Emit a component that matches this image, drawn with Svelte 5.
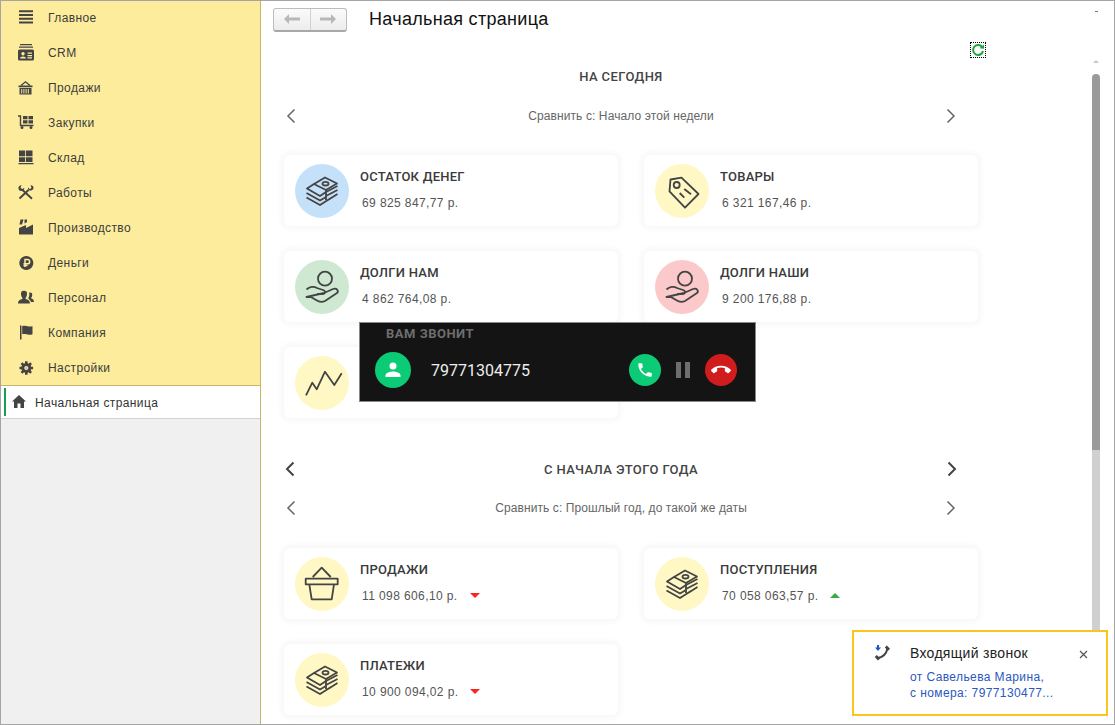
<script>
  const nav = [
    { label: 'Главное', fill: 'M1 .3h14v2H1zM1 4h14v2H1zM1 7.800h14v2H1zM1 11.600h14v2H1z' },
    {
      label: 'CRM',
      fill: 'M2 -1h12v1.200H2zM1 1.400h14v1.400H1zM1.500 4.500h13a1.500 1.500 0 0 1 1.500 1.500v8a1.500 1.500 0 0 1-1.500 1.500h-13A1.500 1.500 0 0 1 0 14V6a1.500 1.500 0 0 1 1.500-1.500zM9.500 7.500v1.200h4.500V7.500zM9.500 10v1.200h4.500V10zM9.500 12.300v1.200h4.500v-1.200zM5 7a1.700 1.700 0 1 0 .01 0zM2 13.500h6c0-2.800-6-2.800-6 0z'
    },
    {
      label: 'Продажи',
      fill: 'M.5 5.500h14v1.700H.5zM1.500 8h12v6.500h-12zM3.200 9v4.500h1V9zM5.400 9v4.500h1V9zM7.600 9v4.500h1V9zM9.800 9v4.500h1V9z',
      stroke: 'M3 5.500L7.500 1.800 12 5.500'
    },
    {
      label: 'Закупки',
      fill: 'M5 1h4.500v3.300H5zM10.500 1h4.500v3.300h-4.500zM5 5.300h4.500v3.300H5zM10.500 5.300h4.500v3.300h-4.500zM2.500 12.500a1.500 1.500 0 1 1 3 0 1.500 1.500 0 0 1-3 0zM11.500 12.500a1.500 1.500 0 1 1 3 0 1.500 1.500 0 0 1-3 0z',
      stroke: 'M0 1h2.500v9.500H15.500'
    },
    { label: 'Склад', fill: 'M1 .5h6.200v5.800H1zM8 .5h6.500v5.800H8zM1 7.200h6.200v4.800H1zM8 7.200h6.500v4.800H8zM.5 13h15v1.300H.5z' },
    {
      label: 'Работы',
      fill: 'M.5 3.500C.2 1.800 1.500 .2 3.500 .3L2.500 2.500 4 4l2.300-1c.2 2-1.500 3.300-3.200 3C1.500 5.800.7 4.800.5 3.500zM12.500 .3c1.700-.2 3.200 1 3 2.800-.1 1.700-2 3-4 2.400-1.300-.5-1.800-1.800-1.500-3L12 4.200l1.500-1.400z',
      stroke: 'M1.500 13.500L10.500 5M4.500 5l9.500 8.800',
      wide: true
    },
    {
      label: 'Производство',
      fill: 'M1 14.500V8l7-3v3l7-3.500v10zM2.500 -.5h3L4 4.500H1.500zM6.500 -.5H9v2.500L6.500 3.500z'
    },
    {
      label: 'Деньги',
      fill: 'M8.300 1a7 7 0 1 0 .01 0z',
      cut: 'M7 12V4.500h2.500a2 2 0 0 1 0 4.300H5.500M5.500 10.500h4'
    },
    {
      label: 'Персонал',
      fill: 'M6 .8a3 3 0 0 1 3 3.200c0 1.700-.8 3.300-1.400 3.800v1.200c2 .6 4.300 1.300 4.400 4.500H0c.1-3.200 2.400-3.900 4.400-4.500V7.800C3.800 7.300 3 5.700 3 4A3 3 0 0 1 6 .8zM12 2.500a2.200 2.200 0 0 1 2.200 2.400c0 1.200-.5 2.300-1 2.700v1c1.300.4 2.800 1 2.800 3.400h-3c-.4-1.400-1.400-2.300-2.500-2.900V7.600c.7-.9 1-2.400.8-3.500L11 2.800z'
    },
    {
      label: 'Компания',
      fill: 'M2 .5h1.500v14H2zM4.200 1.200c3-1.200 4.500 1.300 10.300 0v8c-5 1.500-7-1-10.300 0z'
    },
    {
      label: 'Настройки',
      fill: 'M8.300 3a5 5 0 1 0 .01 0z',
      teeth: 'M8.300 1.200v13.600M1.500 8h13.600M3.500 3.200l9.600 9.600M13.100 3.200l-9.600 9.600',
      cut: 'M8.300 6.700a1.300 1.300 0 1 0 .01 0z'
    }
  ];

  const sections = [
    {
      title: 'НА СЕГОДНЯ',
      compare: 'Сравнить с: Начало этой недели',
      arrows: false,
      cards: [
        { title: 'ОСТАТОК ДЕНЕГ', value: '69 825 847,77 р.', icon: 'money', tone: 'blue' },
        { title: 'ТОВАРЫ', value: '6 321 167,46 р.', icon: 'tag', tone: 'yellow' },
        { title: 'ДОЛГИ НАМ', value: '4 862 764,08 р.', icon: 'hand', tone: 'green' },
        { title: 'ДОЛГИ НАШИ', value: '9 200 176,88 р.', icon: 'hand', tone: 'red' },
        { title: '', value: '', icon: 'trend', tone: 'yellow' }
      ]
    },
    {
      title: 'С НАЧАЛА ЭТОГО ГОДА',
      compare: 'Сравнить с: Прошлый год, до такой же даты',
      arrows: true,
      cards: [
        { title: 'ПРОДАЖИ', value: '11 098 606,10 р.', icon: 'basket', tone: 'yellow', trend: 'down' },
        { title: 'ПОСТУПЛЕНИЯ', value: '70 058 063,57 р.', icon: 'money', tone: 'yellow', trend: 'up' },
        { title: 'ПЛАТЕЖИ', value: '10 900 094,02 р.', icon: 'money', tone: 'yellow', trend: 'down' }
      ]
    }
  ];
</script>

{#snippet chevron(dir, strong)}
  <svg class="chevron" class:strong width="12" height="16" viewBox="0 0 12 16">
    <path d={dir === 'left' ? 'M9.500 1.500L3 8l6.500 6.500' : 'M2.500 1.500L9 8l-6.500 6.500'} />
  </svg>
{/snippet}

{#snippet cardIcon(name)}
  <svg class="card-icon" width="54" height="54" viewBox="0 0 54 54">
    {#if name === 'money'}
      <path d="M19 20L30 13.500 42 19.500 31 26zM31 26v10" />
      <ellipse cx="30.500" cy="19.700" rx="3" ry="1.800" />
      <path d="M19 20l-7 4.500L25 32l6-4M11.500 29L25 36.500l6-3.500M11.500 33.500L25 41l11-7M31 28l11.500-6M31 32l11.500-6M33 36l9.500-6" />
    {:else if name === 'tag'}
      <path d="M15.500 15.500l11-1.800 17 16.300-13.500 13.700-15.500-16.300z" />
      <circle cx="21.700" cy="21" r="3" />
      <path d="M24.700 29l4.600 4.700M29.300 25l6.700 5.300" />
    {:else if name === 'hand'}
      <circle cx="30" cy="18.700" r="7" />
      <path d="M11.500 29.500c3-3 7.500-3.500 10.500-1.500l6 2c3 1 2.500 4-.5 4H22M29 33l9-4c4-1.500 6 2 4 4L30 41c-2 1-6 1-9-1l-5-3h-4.500z" />
    {:else if name === 'trend'}
      <path d="M11 39.300l6.300-12.600 4.400 6.600L30 15.700 39.300 29l7.400-11.700" />
    {:else if name === 'basket'}
      <path d="M17.700 20L26.700 10.700 35.700 20M10.700 21.700h32v5.600h-32zM14.300 27.300l2.400 15h20l2.300-15" />
    {/if}
  </svg>
{/snippet}

<div class="window">
  <aside class="sidebar">
    <nav class="nav">
      {#each nav as item}
        <div class="nav-item">
          <svg class="nav-icon" width="16" height="16" viewBox="0 0 16 16">
            {#if item.teeth}<path class="stroke teeth" d={item.teeth} />{/if}
            <path class="fill" fill-rule="evenodd" d={item.fill} />
            {#if item.stroke}<path class="stroke" class:wide={item.wide} d={item.stroke} />{/if}
            {#if item.cut}<path class="cut" d={item.cut} />{/if}
          </svg>
          <span>{item.label}</span>
        </div>
      {/each}
    </nav>
    <div class="active-tab">
      <svg width="14" height="13" viewBox="0 0 14 13">
        <path fill="#444" d="M7 0l7 6.500h-2V13H8.500V8.500h-3V13H2V6.500H0z" />
      </svg>
      <span>Начальная страница</span>
    </div>
  </aside>

  <main class="main">
    <div class="content">
      <header class="toolbar">
        <div class="history">
          <button class="history-btn" aria-label="Назад">
            <svg width="16" height="10" viewBox="0 0 16 10"><path d="M5 0v3.500h11v3H5V10L0 5z" /></svg>
          </button>
          <button class="history-btn" aria-label="Вперёд">
            <svg width="16" height="10" viewBox="0 0 16 10"><path d="M11 0v3.500H0v3h11V10l5-5z" /></svg>
          </button>
        </div>
        <h1>Начальная страница</h1>
      </header>

      <div class="refresh-row">
        <div class="refresh">
          <svg width="14" height="14" viewBox="0 0 14 14">
            <path d="M11.500 4.500A5 5 0 1 0 12 8" />
            <polygon points="8.500,5.200 13,1.500 13,5.800" />
          </svg>
        </div>
      </div>

      {#each sections as section}
        <section class="section" class:second={section.arrows}>
          <div class="section-head">
            {#if section.arrows}{@render chevron('left', true)}{/if}
            <h2>{section.title}</h2>
            {#if section.arrows}{@render chevron('right', true)}{/if}
          </div>
          <div class="compare">
            {@render chevron('left', false)}
            <span>{section.compare}</span>
            {@render chevron('right', false)}
          </div>
          <div class="cards">
            {#each section.cards as card}
              <article class="card">
                <div class="circle {card.tone}">{@render cardIcon(card.icon)}</div>
                <div class="card-text">
                  <h3>{card.title}</h3>
                  <p>
                    {card.value}
                    {#if card.trend}<i class="trend {card.trend}"></i>{/if}
                  </p>
                </div>
              </article>
            {/each}
          </div>
        </section>
      {/each}
    </div>

    <div class="scrollbar">
      <i class="dash"></i>
      <i class="arrow-up"></i>
      <div class="thumb"></div>
      <div class="track"></div>
    </div>
  </main>

  <div class="call">
    <div class="call-title">ВАМ ЗВОНИТ</div>
    <div class="call-row">
      <div class="avatar">
        <svg width="20" height="20" viewBox="0 0 20 20">
          <circle cx="10" cy="6" r="3.500" />
          <path d="M2.500 17v-1.500c0-3 5-4 7.500-4s7.500 1 7.500 4V17z" />
        </svg>
      </div>
      <div class="number">79771304775</div>
      <button class="round accept" aria-label="Принять">
        <svg width="18" height="18" viewBox="0 0 24 24">
          <path d="M6.600 10.800c1.400 2.800 3.800 5.100 6.600 6.600l2.200-2.200c.3-.3.700-.4 1-.2 1.100.4 2.300.6 3.600.6.600 0 1 .4 1 1V20c0 .6-.4 1-1 1C10.600 21 3 13.400 3 4c0-.6.400-1 1-1h3.500c.6 0 1 .4 1 1 0 1.300.2 2.500.6 3.600.1.300 0 .7-.2 1z" />
        </svg>
      </button>
      <div class="pause"><i></i><i></i></div>
      <button class="round decline" aria-label="Отклонить">
        <svg width="20" height="20" viewBox="0 0 24 24">
          <path d="M12 9c-1.600 0-3.100.3-4.600.7v3.100c0 .4-.2.7-.5.9-1 .5-1.900 1.100-2.700 1.800-.2.200-.4.300-.7.300s-.5-.1-.7-.3L.3 13.100c-.2-.2-.3-.4-.3-.7s.1-.5.300-.7C3.300 8.800 7.400 7 12 7s8.700 1.800 11.700 4.700c.2.200.3.400.3.700s-.1.500-.3.700l-2.500 2.400c-.2.200-.4.300-.7.300s-.5-.1-.7-.3c-.8-.7-1.700-1.300-2.700-1.800-.3-.2-.5-.5-.5-.9V9.700C15.100 9.300 13.600 9 12 9z" />
        </svg>
      </button>
    </div>
  </div>

  <div class="toast">
    <svg class="toast-icon" width="16" height="16" viewBox="0 0 16 16">
      <path class="toast-arrow" d="M2 0h2v2.500h2L3 6 0 2.500h2z" />
      <path class="toast-phone" d="M12.500 3.500C11.500 8 8 12 3 13" />
      <path class="toast-phone thick" d="M10.800 1.500L14 4.800M.8 11L4 14.500" />
    </svg>
    <div class="toast-body">
      <div class="toast-title">Входящий звонок</div>
      <div class="toast-text">от Савельева Марина,</div>
      <div class="toast-text">с номера: 7977130477...</div>
    </div>
    <svg class="toast-close" width="9" height="9" viewBox="0 0 9 9"><path d="M1 1l7 7M8 1L1 8" /></svg>
  </div>
</div>

<style>
  :global(body) {
    margin: 0;
    background: #fff;
  }

  .window {
    position: relative;
    box-sizing: border-box;
    display: flex;
    width: 1115px;
    height: 725px;
    overflow: hidden;
    border: 1px solid #a5a5a5;
    background: #fff;
    font-family: 'Liberation Sans', Arial, sans-serif;
    color: #333;
  }

  /* left panel */
  .sidebar {
    box-sizing: border-box;
    flex: 0 0 260px;
    background: #f0f0f0;
    border-right: 1px solid #c6b669;
  }

  .nav {
    background: #fcec9c;
    border-bottom: 1px solid #c6b669;
    padding-left: 1px;
  }

  .nav-item {
    display: flex;
    align-items: center;
    gap: 14px;
    height: 35px;
    padding-left: 16px;
    font-size: 12px;
    letter-spacing: 0.4px;
    color: #3c3c3c;
  }

  .nav-item:first-child {
    height: 34px;
  }

  .nav-icon {
    flex: none;
    overflow: visible;
  }

  .nav-icon .fill {
    fill: #444;
  }

  .nav-icon .stroke {
    fill: none;
    stroke: #444;
    stroke-width: 1.4;
  }

  .nav-icon .wide {
    stroke-width: 1.9;
  }

  .nav-icon .teeth {
    stroke-width: 2.6;
  }

  .nav-icon .cut {
    fill: none;
    stroke: #fcec9c;
    stroke-width: 1.5;
  }

  .active-tab {
    position: relative;
    box-sizing: border-box;
    display: flex;
    align-items: center;
    gap: 9px;
    height: 33px;
    padding-left: 11px;
    background: #fff;
    border-bottom: 1px solid #d2d2d2;
    font-size: 12px;
    letter-spacing: 0.4px;
    color: #333;
  }

  .active-tab svg {
    margin-bottom: 1px;
  }

  .active-tab span {
    padding-top: 2px;
  }

  .active-tab::before {
    content: '';
    position: absolute;
    left: 3px;
    top: 2px;
    bottom: 2px;
    width: 2px;
    background: #14a050;
  }

  /* main area */
  .main {
    flex: 1;
    display: flex;
    min-width: 0;
  }

  .content {
    flex: 0 0 831px;
    box-sizing: border-box;
    padding-left: 12px;
  }

  .toolbar {
    display: flex;
    align-items: center;
    gap: 22px;
    height: 38px;
    padding-bottom: 1px;
    box-sizing: border-box;
  }

  .history {
    display: flex;
    width: 74px;
    height: 24px;
    box-sizing: border-box;
    border: 1px solid #bdbdbd;
    border-bottom: 2px solid #a8a8a8;
    border-radius: 3px;
    background: linear-gradient(#fbfbfb, #ececec);
  }

  .history-btn {
    flex: 1;
    display: flex;
    align-items: center;
    justify-content: center;
    padding: 0;
    border: 0;
    background: none;
  }

  .history-btn + .history-btn {
    border-left: 1px solid #d0d0d0;
  }

  .history-btn path {
    fill: #b8b8b8;
  }

  h1 {
    margin: 0;
    font-size: 18px;
    font-weight: 400;
    letter-spacing: 0.3px;
    color: #111;
  }

  .refresh-row {
    display: flex;
    justify-content: flex-end;
    height: 20px;
    padding: 3px 106px 0 0;
    margin-bottom: 4px;
  }

  .refresh {
    box-sizing: border-box;
    width: 16px;
    height: 16px;
    border: 1px dotted #000;
    display: flex;
    align-items: center;
    justify-content: center;
  }

  .refresh path {
    fill: none;
    stroke: #1ca53c;
    stroke-width: 2;
  }

  .refresh polygon {
    fill: #1ca53c;
  }

  .section-head {
    display: flex;
    align-items: center;
    justify-content: center;
    height: 20px;
    width: 674px;
    margin-left: 11px;
  }

  .second .section-head {
    justify-content: space-between;
  }

  h2 {
    margin: 0;
    font-family: Roboto, sans-serif;
    font-size: 13px;
    font-weight: 500;
    letter-spacing: 0.4px;
    color: #444;
  }

  .compare {
    display: flex;
    align-items: center;
    justify-content: space-between;
    width: 672px;
    height: 20px;
    margin: 20px 0 29px 12px;
    font-size: 12px;
    letter-spacing: 0.1px;
    color: #666;
  }

  .section.second .compare {
    margin-top: 19px;
    margin-bottom: 30px;
  }

  .chevron {
    flex: none;
  }

  .chevron path {
    fill: none;
    stroke: #666;
    stroke-width: 1.5;
  }

  .chevron.strong path {
    stroke: #444;
    stroke-width: 2;
  }

  .cards {
    display: grid;
    grid-template-columns: 334px 334px;
    column-gap: 26px;
    row-gap: 25px;
    margin-left: 11px;
  }

  .section.second {
    margin-top: 41px;
  }

  .card {
    display: flex;
    align-items: center;
    gap: 11px;
    height: 71px;
    padding-left: 11px;
    box-sizing: border-box;
    background: #fff;
    border-radius: 6px;
    box-shadow: 0 0 6px 3px rgba(0, 0, 0, 0.035);
  }

  .circle {
    flex: none;
    width: 54px;
    height: 54px;
    border-radius: 50%;
  }

  .circle.blue { background: #c5e1fa; }
  .circle.yellow { background: #fff8c4; }
  .circle.green { background: #cfe8d1; }
  .circle.red { background: #fbc9c9; }

  .card-icon {
    display: block;
  }

  .card-icon path,
  .card-icon circle,
  .card-icon ellipse {
    fill: none;
    stroke: #444;
    stroke-width: 1.8;
    stroke-linejoin: round;
  }

  .card-text {
    padding-bottom: 2px;
  }

  h3 {
    margin: 0 0 10px;
    font-family: Roboto, sans-serif;
    font-size: 13px;
    font-weight: 500;
    line-height: 16px;
    letter-spacing: 0.25px;
    color: #3a3a3a;
  }

  .card-text p {
    display: flex;
    align-items: center;
    gap: 12px;
    margin: 0 0 0 2px;
    font-size: 12px;
    line-height: 16px;
    letter-spacing: 0.4px;
    color: #555;
  }

  .trend {
    width: 0;
    height: 0;
    border-left: 5px solid transparent;
    border-right: 5px solid transparent;
  }

  .trend.down {
    border-top: 5px solid #f22;
  }

  .trend.up {
    border-bottom: 5px solid #35ad45;
  }

  /* scroll bar */
  .scrollbar {
    flex: 0 0 8px;
    display: flex;
    flex-direction: column;
    align-items: center;
  }

  .dash {
    width: 3px;
    height: 1px;
    margin-top: 10px;
    background: #777;
  }

  .arrow-up {
    width: 0;
    height: 0;
    margin-top: 48px;
    border-left: 3px solid transparent;
    border-right: 3px solid transparent;
    border-bottom: 3px solid #c8c8c8;
  }

  .thumb {
    width: 8px;
    height: 376px;
    margin-top: 11px;
    border-radius: 4px 4px 0 0;
    background: #9a9a9a;
  }

  .track {
    width: 8px;
    height: 190px;
    background: #d0d0d0;
  }

  /* call panel over the page */
  .call {
    position: absolute;
    left: 358px;
    top: 321px;
    box-sizing: border-box;
    width: 397px;
    height: 80px;
    padding: 3px 18px 0 15px;
    background: #141414;
    border: 1px solid #888;
  }

  .call-title {
    margin-left: 11px;
    font-family: Roboto, sans-serif;
    font-size: 13px;
    font-weight: 700;
    line-height: 16px;
    color: #6e6e6e;
    letter-spacing: 0.5px;
  }

  .call-row {
    display: flex;
    align-items: center;
    margin-top: 10px;
  }

  .avatar {
    display: flex;
    align-items: center;
    justify-content: center;
    width: 36px;
    height: 36px;
    border-radius: 50%;
    background: #0ccb76;
  }

  .avatar svg {
    fill: #fff;
  }

  .number {
    flex: 1;
    margin-left: 20px;
    font-family: Roboto, sans-serif;
    font-size: 16px;
    color: #eee;
  }

  .round {
    display: flex;
    align-items: center;
    justify-content: center;
    width: 32px;
    height: 32px;
    padding: 0;
    border: 0;
    border-radius: 50%;
  }

  .round svg {
    fill: #fff;
  }

  .accept { background: #0ccb76; }
  .decline { background: #d01c1c; }

  .pause {
    display: flex;
    gap: 4px;
    margin: 0 15px;
  }

  .pause i {
    width: 5px;
    height: 16px;
    background: #6e6e6e;
  }

  /* notification */
  .toast {
    position: absolute;
    left: 851px;
    top: 629px;
    box-sizing: border-box;
    display: flex;
    width: 256px;
    height: 86px;
    padding: 12px 0 0 21px;
    background: #fff;
    border: 2px solid #fcc51e;
  }

  .toast-icon {
    flex: none;
    margin-right: 19px;
    margin-top: 1px;
  }

  .toast-arrow {
    fill: #2255c0;
  }

  .toast-phone {
    fill: none;
    stroke: #444;
    stroke-width: 2;
  }

  .toast-phone.thick {
    stroke-width: 2.8;
  }

  .toast-body {
    flex: 1;
  }

  .toast-title {
    font-size: 14px;
    line-height: 18px;
    letter-spacing: 0.3px;
    color: #222;
    margin-bottom: 7px;
  }

  .toast-text {
    font-size: 12px;
    line-height: 16px;
    letter-spacing: 0.4px;
    color: #2a58c0;
  }

  .toast-close {
    flex: none;
    margin: 6px 18px 0 0;
  }

  .toast-close path {
    fill: none;
    stroke: #555;
    stroke-width: 1.2;
  }
</style>
